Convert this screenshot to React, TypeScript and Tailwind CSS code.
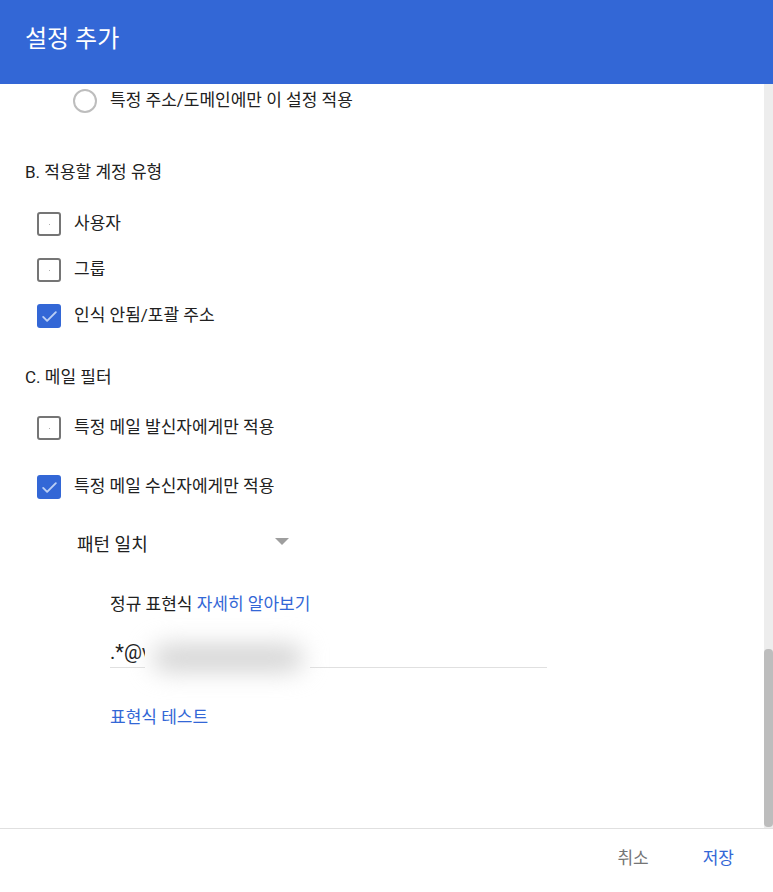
import type { ReactNode } from "react";

const font = { fontFamily: '"Roboto", "Noto Sans CJK KR", sans-serif' };

function Checkbox({ checked }: { checked?: boolean }) {
  if (checked) {
    return (
      <div className="w-[24px] h-[24px] rounded-[3px] bg-[#3367d6] flex items-center justify-center">
        <svg width="19" height="19" viewBox="0 0 24 24" fill="none">
          <path d="M4 12.5l5 5L20 6.5" stroke="#bcd0f5" strokeWidth="2.4" strokeLinecap="round" strokeLinejoin="round" />
        </svg>
      </div>
    );
  }
  return (
    <div className="w-[24px] h-[24px] rounded-[3px] border-2 border-[#757575] flex items-center justify-center">
      <div className="w-[1px] h-[1px] bg-[#b0b0b0]" />
    </div>
  );
}

function CheckRow({ checked, children, className }: { checked?: boolean; children: ReactNode; className: string }) {
  return (
    <div className={`flex items-center h-[24px] pl-[37px] ${className}`}>
      <Checkbox checked={checked} />
      <span className="ml-[13px] text-[17px] text-[#212121]">{children}</span>
    </div>
  );
}

export default function App() {
  return (
    <div className="w-[773px] h-[892px] bg-white flex flex-col overflow-hidden" style={font}>
      {/* Header */}
      <div className="h-[84px] bg-[#3367d6] flex items-center pl-[25px] shrink-0">
        <h1 className="text-[24px] text-white leading-none -mt-[6px]">설정 추가</h1>
      </div>

      {/* Body */}
      <div className="flex flex-1 min-h-0">
        <div className="flex-1 flex flex-col relative">
          <div className="flex items-center h-[24px] mt-[5px] pl-[73px]">
            <div className="w-[24px] h-[24px] rounded-full border-2 border-[#bdbdbd]" />
            <span className="ml-[13px] text-[17px] text-[#212121]">특정 주소/도메인에만 이 설정 적용</span>
          </div>

          <div className="mt-[47px] pl-[25px] h-[24px] leading-[24px] text-[17px] text-[#212121]">B. 적용할 계정 유형</div>

          <CheckRow className="mt-[28px]">사용자</CheckRow>
          <CheckRow className="mt-[22px]">그룹</CheckRow>
          <CheckRow checked className="mt-[22px]">인식 안됨/포괄 주소</CheckRow>

          <div className="mt-[37px] pl-[25px] h-[24px] leading-[24px] text-[17px] text-[#212121]">C. 메일 필터</div>

          <CheckRow className="mt-[27px]">특정 메일 발신자에게만 적용</CheckRow>
          <CheckRow checked className="mt-[35px]">특정 메일 수신자에게만 적용</CheckRow>

          <div className="mt-[33px] pl-[77px] h-[24px] flex items-center">
            <span className="text-[18px] text-[#212121] w-[198px]">패턴 일치</span>
            <svg width="14" height="7" viewBox="0 0 14 7" className="-mt-[6px]">
              <path d="M0 0h14L7 7z" fill="#9e9e9e" />
            </svg>
          </div>

          <div className="mt-[36px] pl-[110px] h-[24px] leading-[24px] text-[17px] text-[#212121]">
            정규 표현식 <span className="text-[#3367d6]">자세히 알아보기</span>
          </div>

          <div className="mt-[20px] ml-[110px] w-[437px] h-[32px] border-b border-[#e0e0e0] flex items-center relative">
            <span className="text-[20px] text-[#212121] leading-none">.*@v</span>
            <div className="absolute left-[35px] top-[-10px] w-[165px] h-[64px] bg-white flex items-center justify-center">
              <div className="w-[150px] h-[26px] rounded-full bg-[#d2d2d2] blur-md" />
            </div>
          </div>

          <div className="mt-[37px] pl-[110px] h-[24px] leading-[24px] text-[17px] text-[#3367d6]">표현식 테스트</div>
        </div>

        {/* Scrollbar */}
        <div className="w-[9px] bg-[#ededed] flex flex-col justify-end">
          <div className="h-[178px] bg-[#bdbdbd] rounded-[4px] mb-[1px]" />
        </div>
      </div>

      {/* Footer */}
      <div className="h-[64px] shrink-0 border-t border-[#e0e0e0] flex items-center justify-end pr-[39px] gap-[54px]">
        <button className="text-[17px] text-[#757575] mt-[-3px]">취소</button>
        <button className="text-[17px] text-[#3367d6] mt-[-3px]">저장</button>
      </div>
    </div>
  );
}
